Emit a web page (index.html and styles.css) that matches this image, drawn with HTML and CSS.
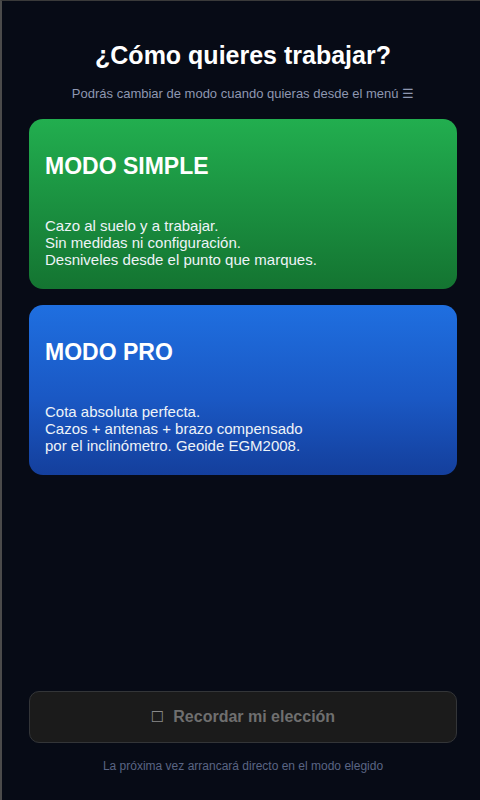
FILE: index.html
```html
<!DOCTYPE html>
<html lang="es">
<head>
<meta charset="utf-8">
<title>Modo de trabajo</title>
<link rel="stylesheet" href="styles.css">
</head>
<body>
<main class="screen">
  <h1 class="title">¿Cómo quieres trabajar?</h1>
  <p class="subtitle">Podrás cambiar de modo cuando quieras desde el menú ☰</p>
  <section class="cards">
    <div class="card card-simple">
      <h2 class="card-title">MODO SIMPLE</h2>
      <p class="card-desc">Cazo al suelo y a trabajar.<br>Sin medidas ni configuración.<br>Desniveles desde el punto que marques.</p>
    </div>
    <div class="card card-pro">
      <h2 class="card-title">MODO PRO</h2>
      <p class="card-desc">Cota absoluta perfecta.<br>Cazos + antenas + brazo compensado<br>por el inclinómetro. Geoide EGM2008.</p>
    </div>
  </section>
  <div class="bottom">
    <button class="remember"><span class="box">☐</span>Recordar mi elección</button>
    <p class="hint">La próxima vez arrancará directo en el modo elegido</p>
  </div>
</main>
</body>
</html>
```

FILE: styles.css
```css
html, body {
  margin: 0;
  padding: 0;
  height: 100%;
}
body {
  background: #070b16;
  border-left: 2px solid #4b4b4b;
  border-top: 1px solid #3a3a3a;
  box-sizing: border-box;
  font-family: "Liberation Sans", Arial, sans-serif;
  color: #fff;
}
.screen {
  display: flex;
  flex-direction: column;
  min-height: 799px;
  box-sizing: border-box;
  padding: 40px 23px 27px 27px;
}
.title {
  margin: 0;
  font-size: 25px;
  line-height: 29px;
  font-weight: 700;
  text-align: center;
  color: #ffffff;
}
.subtitle {
  margin: 16px 0 0;
  font-size: 13px;
  line-height: 15px;
  text-align: center;
  color: #8e97b1;
}
.cards {
  display: flex;
  flex-direction: column;
  gap: 16px;
  margin-top: 18px;
}
.card {
  height: 170px;
  box-sizing: border-box;
  padding: 33px 16px 21px;
  border-radius: 14px;
}
.card-simple {
  background: linear-gradient(180deg, #22ae4f 0%, #1a8e3f 55%, #147431 100%);
}
.card-pro {
  background: linear-gradient(180deg, #1f6fe0 0%, #1a58c4 55%, #143f9c 100%);
}
.card-title {
  margin: 0;
  font-size: 23px;
  line-height: 28px;
  font-weight: 700;
  color: #ffffff;
}
.card-desc {
  margin: 37px 0 0;
  font-size: 15px;
  line-height: 17px;
  color: #eef3f8;
}
.bottom {
  margin-top: auto;
  display: flex;
  flex-direction: column;
}
.remember {
  height: 52px;
  border: 1px solid #333538;
  border-radius: 10px;
  background: #1b1b1b;
  color: #6f6f6f;
  font-family: "Liberation Sans", Arial, sans-serif;
  font-size: 16px;
  font-weight: 700;
  display: flex;
  align-items: center;
  justify-content: center;
  gap: 9px;
  padding: 0;
}
.box {
  font-family: "DejaVu Sans", sans-serif;
  font-weight: 400;
  font-size: 15px;
  color: #8a8a8a;
}
.hint {
  margin: 16px 0 0;
  font-size: 12px;
  line-height: 14px;
  text-align: center;
  color: #5a6584;
}
```
